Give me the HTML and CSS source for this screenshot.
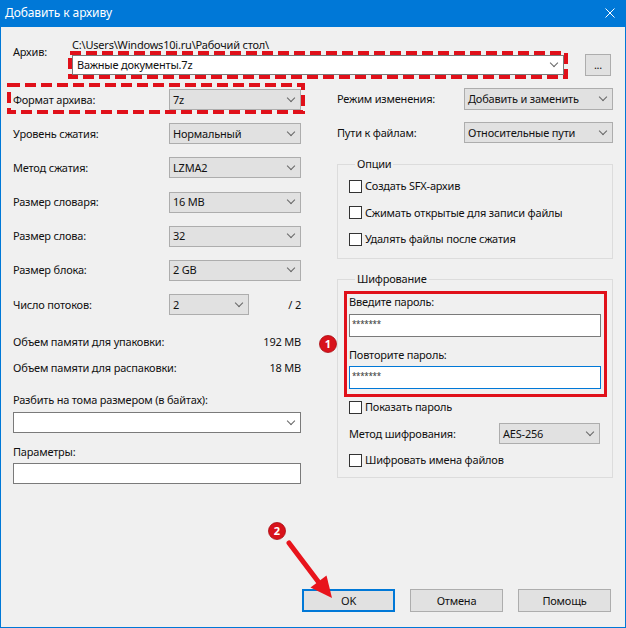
FILE: index.html
```html
<!DOCTYPE html>
<html lang="ru">
<head>
  <meta charset="UTF-8">
  <title>Добавить к архиву</title>
  <link rel="stylesheet" href="styles.css">
</head>
<body>
  <div class="window">
    <div class="titlebar">
      <span class="title">Добавить к архиву</span>
      <svg class="close" width="10" height="10" viewBox="0 0 10 10"><path d="M0.5 0.5L9.5 9.5M9.5 0.5L0.5 9.5" stroke="#fff" stroke-width="1"/></svg>
    </div>

    <div class="dialog">
      <div class="archive">
        <span class="archive-label">Архив:</span>
        <div class="archive-field">
          <div class="path">C:\Users\Windows10i.ru\Рабочий стол\</div>
          <div class="combo">Важные документы.7z</div>
        </div>
        <div class="btn browse">...</div>
      </div>

      <div class="columns">
        <div class="left">
          <div class="rows">
            <div class="row"><span>Формат архива:</span><div class="select">7z</div></div>
            <div class="row"><span>Уровень сжатия:</span><div class="select">Нормальный</div></div>
            <div class="row"><span>Метод сжатия:</span><div class="select">LZMA2</div></div>
            <div class="row"><span>Размер словаря:</span><div class="select">16 MB</div></div>
            <div class="row"><span>Размер слова:</span><div class="select">32</div></div>
            <div class="row"><span>Размер блока:</span><div class="select">2 GB</div></div>
            <div class="row">
              <span>Число потоков:</span>
              <div class="threads"><div class="select short">2</div><span>/ 2</span></div>
            </div>
          </div>

          <div class="memory">
            <div class="mem-line"><span>Объем памяти для упаковки:</span><span>192 MB</span></div>
            <div class="mem-line"><span>Объем памяти для распаковки:</span><span>18 MB</span></div>
          </div>

          <div class="field split">
            <span>Разбить на тома размером (в байтах):</span>
            <div class="combo"></div>
          </div>
          <div class="field params">
            <span>Параметры:</span>
            <div class="input"></div>
          </div>
        </div>

        <div class="right">
          <div class="rrow mode"><span>Режим изменения:</span><div class="select">Добавить и заменить</div></div>
          <div class="rrow paths"><span>Пути к файлам:</span><div class="select">Относительные пути</div></div>

          <fieldset class="group options">
            <legend>Опции</legend>
            <label class="check"><span class="box"></span>Создать SFX-архив</label>
            <label class="check"><span class="box"></span>Сжимать открытые для записи файлы</label>
            <label class="check"><span class="box"></span>Удалять файлы после сжатия</label>
          </fieldset>

          <fieldset class="group crypt">
            <legend>Шифрование</legend>
            <span>Введите пароль:</span>
            <div class="input pass first">*******</div>
            <span class="repeat">Повторите пароль:</span>
            <div class="input pass focused">*******</div>
            <label class="check show"><span class="box"></span>Показать пароль</label>
            <div class="method"><span>Метод шифрования:</span><div class="select">AES-256</div></div>
            <label class="check names"><span class="box"></span>Шифровать имена файлов</label>
          </fieldset>
        </div>
      </div>

      <div class="buttons">
        <div class="btn ok">OK</div>
        <div class="btn">Отмена</div>
        <div class="btn">Помощь</div>
      </div>
    </div>

    <!-- red markup drawn over the dialog -->
    <svg class="marks" width="626" height="628" viewBox="0 0 626 628">
      <rect x="70" y="53" width="496" height="24" fill="none" stroke="#e0101a" stroke-width="4" stroke-dasharray="11 5"/>
      <rect x="9" y="85" width="294" height="27" fill="none" stroke="#e0101a" stroke-width="4" stroke-dasharray="11 5"/>
      <rect x="345.5" y="292.5" width="260" height="103" fill="none" stroke="#e0101a" stroke-width="3"/>
      <circle cx="328" cy="344" r="8.5" fill="#d8121b" stroke="#a80a10" stroke-width="0.8"/>
      <text x="328" y="348" class="badge-num">1</text>
      <circle cx="277" cy="531" r="8.5" fill="#d8121b" stroke="#a80a10" stroke-width="0.8"/>
      <text x="277" y="535" class="badge-num">2</text>
      <line x1="289" y1="543" x2="320" y2="584" stroke="#e8141c" stroke-width="5" stroke-linecap="round"/>
      <polygon points="310.5,587.5 326.5,575.5 332,598" fill="#e8141c"/>
    </svg>
  </div>
</body>
</html>
```

FILE: styles.css
```css
body {
  margin: 0;
  font-family: "Noto Sans", sans-serif;
  font-size: 11px;
  line-height: 14px;
  letter-spacing: -0.2px;
  color: #111;
}

.window {
  position: relative;
  width: 626px;
  height: 628px;
  box-sizing: border-box;
  border: 1px solid #0078d7;
  background: #f0f0f0;
  display: flex;
  flex-direction: column;
}

.titlebar {
  height: 26px;
  flex-shrink: 0;
  background: #0078d7;
  color: #fff;
  display: flex;
  align-items: center;
  padding: 0 10px 2px 4px;
  box-sizing: border-box;
}

.title {
  font-size: 12px;
  letter-spacing: -0.1px;
}

.close {
  margin-left: auto;
}

.dialog {
  flex: 1;
  display: flex;
  flex-direction: column;
  padding: 11px 12px 15px 12px;
}

/* top: archive name */
.archive {
  display: flex;
  height: 37px;
}

.archive-label {
  width: 59px;
  padding-top: 7px;
}

.archive-field {
  width: 492px;
  display: flex;
  flex-direction: column;
  gap: 3px;
}

.combo,
.select,
.input {
  box-sizing: border-box;
  display: flex;
  align-items: center;
  white-space: nowrap;
}

.combo {
  height: 20px;
  border: 1px solid #7a7a7a;
  background: #fff;
  padding: 0 6px 0 4px;
}

.select {
  height: 21px;
  border: 1px solid #adadad;
  background: #e1e1e1;
  padding: 0 6px 0 3px;
}

.combo::after,
.select::after {
  content: "";
  margin-left: auto;
  width: 5px;
  height: 5px;
  border-right: 1px solid #666;
  border-bottom: 1px solid #666;
  transform: translateY(-2px) rotate(45deg);
}

.input {
  height: 21px;
  border: 1px solid #7a7a7a;
  background: #fff;
}

.btn {
  box-sizing: border-box;
  background: #e1e1e1;
  border: 1px solid #adadad;
  display: flex;
  align-items: center;
  justify-content: center;
}

.browse {
  margin-left: auto;
  margin-right: 2px;
  margin-top: 16px;
  width: 26px;
  height: 22px;
}

/* two columns */
.columns {
  display: flex;
  gap: 36px;
  margin-top: 13px;
}

.left {
  width: 288px;
}

.right {
  width: 276px;
}

.rows {
  display: grid;
  row-gap: 13.2px;
  padding-top: 1px;
}

.row {
  display: grid;
  grid-template-columns: 156px 132px;
  align-items: center;
  height: 21px;
}

.threads {
  display: flex;
  justify-content: space-between;
  align-items: center;
}

.select.short {
  width: 80px;
}

.memory {
  margin-top: 20px;
  display: flex;
  flex-direction: column;
  gap: 12px;
}

.mem-line {
  display: flex;
  justify-content: space-between;
}

.field {
  display: flex;
  flex-direction: column;
}

.split {
  margin-top: 18px;
  gap: 5px;
}

.split .combo {
  height: 21px;
}

.params {
  margin-top: 12px;
  gap: 4px;
}

/* right side */
.rrow {
  display: grid;
  grid-template-columns: 127px 1fr;
  align-items: center;
  white-space: nowrap;
}

.mode .select {
  height: 22px;
}

.paths {
  margin-top: 12px;
}

.group {
  margin: 14px 0 0;
  border: 1px solid #dcdcdc;
  min-width: 0;
  display: flex;
  flex-direction: column;
}

.group legend {
  margin-left: 6px;
  padding: 0 2px;
  line-height: 14px;
}

.options {
  padding: 8px 11px 12px 11px;
  gap: 12.5px;
}

.check {
  display: flex;
  align-items: center;
  gap: 3px;
  height: 14px;
}

.box {
  width: 13px;
  height: 13px;
  box-sizing: border-box;
  border: 1px solid #333;
  background: #fff;
}

.crypt {
  margin-top: 13px;
  padding: 9px 11px 10px 11px;
}

.pass {
  height: 23px;
  align-items: flex-start;
  padding: 4px 0 0 2px;
  font-size: 8px;
  line-height: 9px;
  letter-spacing: -0.3px;
  color: #333;
}

.pass.first {
  margin-top: 5px;
}

.repeat {
  margin-top: 11px;
}

.pass.focused {
  margin-top: 4px;
  border-color: #0078d7;
}

.show {
  margin-top: 11px;
}

.method {
  margin-top: 9px;
  display: grid;
  grid-template-columns: 150px 101px;
  align-items: center;
}

.names {
  margin-top: 9px;
}

/* bottom buttons */
.buttons {
  margin-top: auto;
  display: flex;
  justify-content: flex-end;
  gap: 15px;
  padding-right: 2px;
}

.buttons .btn {
  width: 93px;
  height: 23px;
}

.buttons .ok {
  border: 2px solid #0078d7;
}

.marks {
  position: absolute;
  left: -1px;
  top: -1px;
  pointer-events: none;
}

.badge-num {
  fill: #fff;
  font-family: "Noto Sans", sans-serif;
  font-size: 11px;
  font-weight: bold;
  text-anchor: middle;
  letter-spacing: 0;
}
```
